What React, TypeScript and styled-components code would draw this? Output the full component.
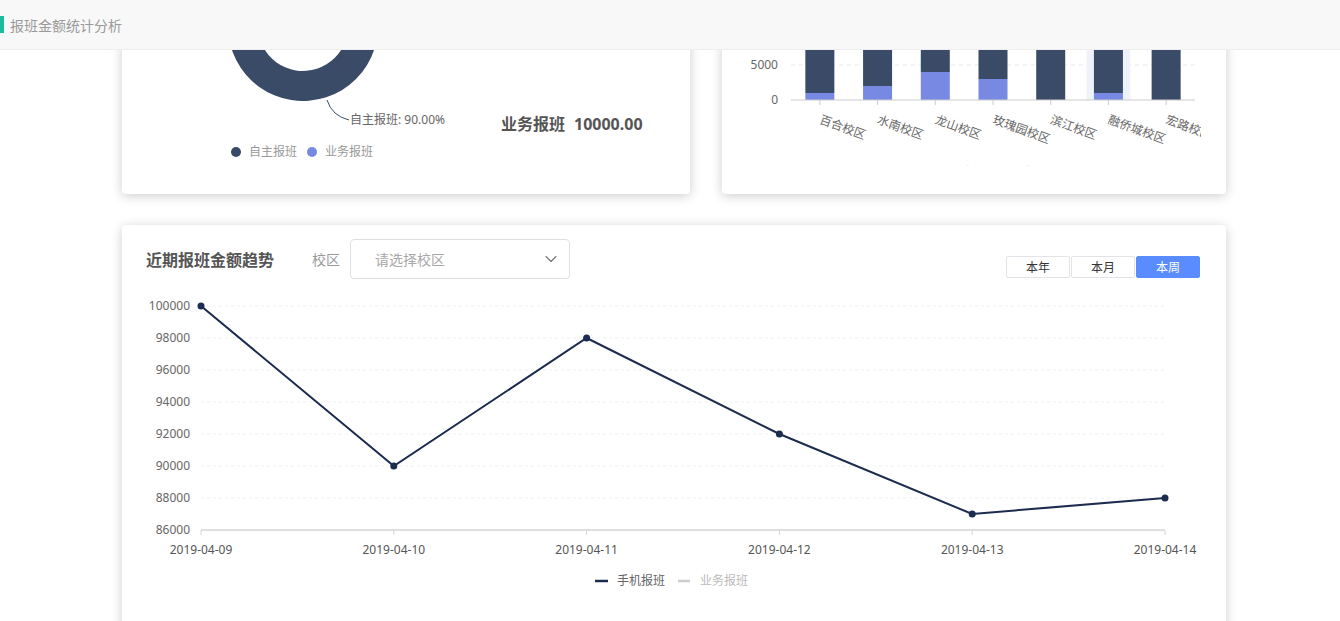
import React, { useState } from "react";
import styled, { createGlobalStyle } from "styled-components";
import { ChevronDown } from "lucide-react";

const COLORS = {
  dark: "#3a4b68",
  blue: "#7889e4",
  line: "#1b2c4f",
  text: "#666",
  muted: "#999",
  axis: "#d4d4d4",
  grid: "#e9e9e9",
  accent: "#1abc9c",
  active: "#5b8cff",
};

const GlobalStyle = createGlobalStyle`
  * { box-sizing: border-box; }
  body {
    margin: 0;
    background: #fff;
    font-family: "Noto Sans", "Noto Sans CJK SC", sans-serif;
    color: #333;
  }
`;

const Page = styled.div`
  height: 621px;
  overflow: hidden;
`;

const Header = styled.header`
  position: fixed;
  top: 0;
  left: 0;
  right: 0;
  z-index: 5;
  height: 50px;
  background: #f8f8f8;
  border-bottom: 1px solid #ededed;
  display: flex;
  align-items: center;
  gap: 6px;
`;

const HeaderMark = styled.span`
  width: 4px;
  height: 17px;
  background: ${COLORS.accent};
`;

const HeaderTitle = styled.h1`
  margin: 0;
  font-size: 14px;
  font-weight: 400;
  color: ${COLORS.muted};
`;

/* page is shown scrolled down by 106px, as in the capture */
const Main = styled.main`
  width: 1104px;
  margin: -106px 0 0 122px;
  display: flex;
  flex-direction: column;
  gap: 31px;
`;

const TopRow = styled.div`
  display: flex;
  gap: 32px;
`;

const Card = styled.section<{ $w: number; $h: number }>`
  width: ${(p) => p.$w}px;
  height: ${(p) => p.$h}px;
  background: #fff;
  border-radius: 4px;
  box-shadow: 0 2px 12px rgba(0, 0, 0, 0.2);
  overflow: hidden;
`;

const PieCard = styled(Card)`
  display: flex;
  align-items: flex-start;
`;

const StatList = styled.div`
  margin-top: 218px;
  margin-left: 9px;
  display: flex;
  flex-direction: column;
  gap: 16px;
`;

const StatRow = styled.div`
  display: flex;
  gap: 9px;
  font-size: 16px;
  font-weight: 700;
  line-height: 24px;
  color: #555;
`;

const ChartSvg = styled.svg`
  display: block;
  overflow: hidden;
  font-family: "Noto Sans", "Noto Sans CJK SC", sans-serif;
`;

const TrendHeader = styled.div`
  display: flex;
  align-items: center;
  height: 40px;
  margin: 14px 26px 10px 24px;
`;

const TrendTitle = styled.h2`
  margin: 0;
  font-size: 16px;
  font-weight: 700;
  color: #555;
`;

const FieldLabel = styled.label`
  margin-left: 38px;
  margin-right: 10px;
  font-size: 14px;
  color: ${COLORS.muted};
`;

const Select = styled.div`
  width: 220px;
  height: 40px;
  border: 1px solid #dcdfe6;
  border-radius: 4px;
  display: flex;
  align-items: center;
  justify-content: space-between;
  padding: 0 8px 0 24px;
  font-size: 14px;
  color: #a8a8a8;
`;

const RangeGroup = styled.div`
  margin-left: auto;
  align-self: flex-start;
  margin-top: 17px;
  display: flex;
  gap: 1px;
`;

const RangeButton = styled.button<{ $active?: boolean }>`
  width: 64px;
  height: 22px;
  padding: 0;
  border: 1px solid ${(p) => (p.$active ? COLORS.active : "#e2e2e8")};
  border-radius: 2px;
  background: ${(p) => (p.$active ? COLORS.active : "#fff")};
  color: ${(p) => (p.$active ? "#fff" : "#333")};
  font-family: inherit;
  font-size: 12px;
  cursor: pointer;
`;

// ---------- donut ----------
const arc = (cx: number, cy: number, r0: number, r1: number, a0: number, a1: number) => {
  const pt = (r: number, a: number) => {
    const rad = (a * Math.PI) / 180;
    return [cx + r * Math.sin(rad), cy - r * Math.cos(rad)];
  };
  const large = a1 - a0 > 180 ? 1 : 0;
  const [x0, y0] = pt(r1, a0);
  const [x1, y1] = pt(r1, a1);
  const [x2, y2] = pt(r0, a1);
  const [x3, y3] = pt(r0, a0);
  return `M${x0} ${y0} A${r1} ${r1} 0 ${large} 1 ${x1} ${y1} L${x2} ${y2} A${r0} ${r0} 0 ${large} 0 ${x3} ${y3}Z`;
};

const Donut = () => (
  <ChartSvg width={370} height={300}>
    <path d={arc(181, 132, 45, 75, 0, 324)} fill={COLORS.dark} />
    <path d={arc(181, 132, 45, 75, 324, 360)} fill={COLORS.blue} />
    <path d="M205 206 Q210 222 227 226" fill="none" stroke={COLORS.dark} strokeWidth={1} />
    <text x={228} y={230} fontSize={12} fill={COLORS.text}>
      自主报班: 90.00%
    </text>
    <circle cx={114} cy={258} r={5} fill={COLORS.dark} />
    <text x={127} y={262} fontSize={12} fill={COLORS.muted}>
      自主报班
    </text>
    <circle cx={190} cy={258} r={5} fill={COLORS.blue} />
    <text x={203} y={262} fontSize={12} fill={COLORS.muted}>
      业务报班
    </text>
  </ChartSvg>
);

// ---------- stacked bars ----------
const SCHOOLS = [
  { name: "百合校区", self: 17000, biz: 1000 },
  { name: "水南校区", self: 16000, biz: 2000 },
  { name: "龙山校区", self: 14000, biz: 4000 },
  { name: "玫瑰园校区", self: 15000, biz: 3000 },
  { name: "滨江校区", self: 18000, biz: 0 },
  { name: "融侨城校区", self: 17000, biz: 1000 },
  { name: "宏路校区", self: 18000, biz: 0 },
];

const BarChart = () => {
  const x0 = 69;
  const x1 = 473;
  const base = 206;
  const k = 35 / 5000;
  const step = (x1 - x0) / SCHOOLS.length;
  const bw = 29;
  return (
    <ChartSvg width={479} height={272}>
      {[5000, 10000, 15000, 20000].map((v) => (
        <line key={v} x1={x0} x2={x1} y1={base - v * k} y2={base - v * k} stroke={COLORS.grid} strokeDasharray="4 4" />
      ))}
      {[0, 5000, 10000].map((v) => (
        <text key={v} x={56} y={base - v * k + 4} fontSize={12} fill={COLORS.text} textAnchor="end">
          {v}
        </text>
      ))}
      <rect x={x0 + step * 5 + 7} y={40} width={step - 14} height={base - 40} fill="#eef2fb" />
      {SCHOOLS.map((s, i) => {
        const cx = x0 + step * (i + 0.5);
        const hb = s.biz * k;
        const hs = s.self * k;
        return (
          <g key={s.name}>
            <rect x={cx - bw / 2} y={base - hb} width={bw} height={hb} fill={COLORS.blue} />
            <rect x={cx - bw / 2} y={base - hb - hs} width={bw} height={hs} fill={COLORS.dark} />
            <line x1={cx} x2={cx} y1={base} y2={base + 5} stroke="#ccc" />
            <text x={cx} y={226} fontSize={12} fill={COLORS.text} dominantBaseline="middle" transform={`rotate(20 ${cx} 226)`}>
              {s.name}
            </text>
          </g>
        );
      })}
      <line x1={x0} x2={x1} y1={base} y2={base} stroke="#ccc" />
      <circle cx={208} cy={279} r={5} fill={COLORS.dark} />
      <text x={219} y={283} fontSize={12} fill={COLORS.text}>自主报班</text>
      <circle cx={268} cy={279} r={5} fill={COLORS.blue} />
      <text x={279} y={283} fontSize={12} fill={COLORS.text}>业务报班</text>
    </ChartSvg>
  );
};

// ---------- trend line ----------
const TREND = [
  { date: "2019-04-09", value: 100000 },
  { date: "2019-04-10", value: 90000 },
  { date: "2019-04-11", value: 98000 },
  { date: "2019-04-12", value: 92000 },
  { date: "2019-04-13", value: 87000 },
  { date: "2019-04-14", value: 88000 },
];

const TrendChart = () => {
  const left = 79;
  const right = 1043;
  const top = 17;
  const bottom = 241;
  const min = 86000;
  const max = 100000;
  const y = (v: number) => bottom - ((v - min) / (max - min)) * (bottom - top);
  const x = (i: number) => left + ((right - left) / (TREND.length - 1)) * i;
  const ticks = [86000, 88000, 90000, 92000, 94000, 96000, 98000, 100000];
  const pts = TREND.map((d, i) => `${x(i)},${y(d.value)}`).join(" ");
  return (
    <ChartSvg width={1104} height={320}>
      {ticks.slice(1).map((v) => (
        <line key={v} x1={left} x2={right} y1={y(v)} y2={y(v)} stroke="#efefef" strokeDasharray="3 3" />
      ))}
      {ticks.map((v) => (
        <text key={v} x={68} y={y(v) + 4} fontSize={12} fill={COLORS.text} textAnchor="end">
          {v}
        </text>
      ))}
      <line x1={left} x2={right} y1={bottom} y2={bottom} stroke={COLORS.axis} strokeWidth={1.5} />
      {TREND.map((d, i) => (
        <g key={d.date}>
          <line x1={x(i)} x2={x(i)} y1={bottom} y2={bottom + 5} stroke={COLORS.axis} />
          <text x={x(i)} y={265} fontSize={12} fill="#555" textAnchor="middle">
            {d.date}
          </text>
        </g>
      ))}
      <polyline points={pts} fill="none" stroke={COLORS.line} strokeWidth={2} />
      {TREND.map((d, i) => (
        <circle key={d.date} cx={x(i)} cy={y(d.value)} r={3.5} fill={COLORS.line} />
      ))}
      <line x1={473} x2={486} y1={292} y2={292} stroke={COLORS.line} strokeWidth={2.5} />
      <text x={495} y={296} fontSize={12} fill={COLORS.text}>手机报班</text>
      <line x1={556} x2={568} y1={292} y2={292} stroke="#ccc" strokeWidth={2.5} />
      <text x={578} y={296} fontSize={12} fill="#bbb">业务报班</text>
    </ChartSvg>
  );
};

const RANGES = ["本年", "本月", "本周"];

const App = () => {
  const [range, setRange] = useState("本周");
  return (
    <Page>
      <GlobalStyle />
      <Header>
        <HeaderMark />
        <HeaderTitle>报班金额统计分析</HeaderTitle>
      </Header>
      <Main>
        <TopRow>
          <PieCard $w={568} $h={300}>
            <Donut />
            <StatList>
              <StatRow>
                <span>业务报班</span>
                <span>10000.00</span>
              </StatRow>
            </StatList>
          </PieCard>
          <Card $w={504} $h={300}>
            <BarChart />
          </Card>
        </TopRow>
        <Card $w={1104} $h={440}>
          <TrendHeader>
            <TrendTitle>近期报班金额趋势</TrendTitle>
            <FieldLabel>校区</FieldLabel>
            <Select>
              <span>请选择校区</span>
              <ChevronDown size={20} strokeWidth={1.4} color="#777" />
            </Select>
            <RangeGroup>
              {RANGES.map((r) => (
                <RangeButton key={r} $active={r === range} onClick={() => setRange(r)}>
                  {r}
                </RangeButton>
              ))}
            </RangeGroup>
          </TrendHeader>
          <TrendChart />
        </Card>
      </Main>
    </Page>
  );
};

export default App;
